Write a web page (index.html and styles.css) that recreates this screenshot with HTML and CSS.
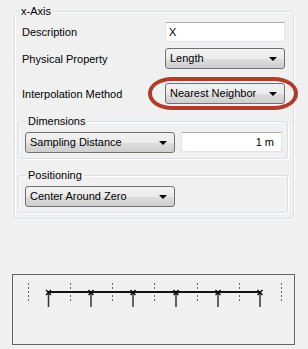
FILE: index.html
```html
<!DOCTYPE html>
<html lang="en">
<head>
    <meta charset="UTF-8">
    <title>x-Axis</title>
    <link rel="stylesheet" href="styles.css">
</head>
<body>
    <div class="page">
        <div class="group outer">
            <div class="legend">x-Axis</div>
            <div class="row first">
                <span class="label">Description</span>
                <div class="textbox">X</div>
            </div>
            <div class="row">
                <span class="label">Physical Property</span>
                <div class="combo">Length<span class="arrow"></span></div>
            </div>
            <div class="row third">
                <span class="label">Interpolation Method</span>
                <div class="combo">Nearest Neighbor<span class="arrow"></span></div>
            </div>

            <div class="group inner dims">
                <div class="legend">Dimensions</div>
                <div class="pair">
                    <div class="combo wide">Sampling Distance<span class="arrow"></span></div>
                    <div class="textbox num">1 m</div>
                </div>
            </div>

            <div class="group inner pos">
                <div class="legend">Positioning</div>
                <div class="pair">
                    <div class="combo wide">Center Around Zero<span class="arrow"></span></div>
                </div>
            </div>
        </div>

        <!-- annotation drawn over the screenshot -->
        <div class="highlight"></div>

        <div class="preview">
            <svg width="281" height="69" viewBox="0 0 281 69">
                <g stroke="#666" stroke-width="1" stroke-dasharray="2 2">
                    <line x1="15.5" y1="8" x2="15.5" y2="26"/>
                    <line x1="57.5" y1="8" x2="57.5" y2="26"/>
                    <line x1="99.5" y1="8" x2="99.5" y2="26"/>
                    <line x1="141.5" y1="8" x2="141.5" y2="26"/>
                    <line x1="184.5" y1="8" x2="184.5" y2="26"/>
                    <line x1="226.5" y1="8" x2="226.5" y2="26"/>
                    <line x1="268.5" y1="8" x2="268.5" y2="26"/>
                </g>
                <line x1="35" y1="17" x2="247" y2="17" stroke="#111" stroke-width="2"/>
                <g stroke="#333" stroke-width="1.5">
                    <line x1="35.5" y1="17" x2="35.5" y2="32"/>
                    <line x1="78" y1="17" x2="78" y2="32"/>
                    <line x1="120" y1="17" x2="120" y2="32"/>
                    <line x1="163" y1="17" x2="163" y2="32"/>
                    <line x1="205" y1="17" x2="205" y2="32"/>
                    <line x1="247" y1="17" x2="247" y2="32"/>
                </g>
                <g stroke="#000" stroke-width="1.3">
                    <path d="M33 15l5 5M38 15l-5 5"/>
                    <path d="M75.5 15l5 5M80.5 15l-5 5"/>
                    <path d="M117.5 15l5 5M122.5 15l-5 5"/>
                    <path d="M160.5 15l5 5M165.5 15l-5 5"/>
                    <path d="M202.5 15l5 5M207.5 15l-5 5"/>
                    <path d="M244.5 15l5 5M249.5 15l-5 5"/>
                </g>
            </svg>
        </div>
    </div>
</body>
</html>
```

FILE: styles.css
```css
body {
    margin: 0;
    background-color: #f0f0f0;
    font-family: "Liberation Sans", Arial, sans-serif;
    font-size: 11px;
    color: #000;
}
.page {
    position: relative;
    width: 308px;
    height: 349px;
    padding-top: 11px;
    box-sizing: border-box;
}
.group {
    border: 1px solid #d5dfe5;
    border-radius: 3px;
    box-shadow: inset 1px 1px 0 #fff, 1px 1px 0 #fff;
}
.legend {
    width: fit-content;
    height: 14px;
    line-height: 14px;
    margin: -8px 0 0 0;
    padding: 0 2px;
    background-color: #f0f0f0;
}
.outer {
    margin-left: 14px;
    padding: 0 8px 5px 7px;
    box-sizing: border-box;
    width: 280px;
}
.outer > .legend {
    margin-left: -3px;
}
.row {
    display: flex;
    align-items: center;
    justify-content: space-between;
    margin-top: 6px;
}
.row.first {
    margin-top: 4px;
}
.row.third {
    margin-top: 14px;
}
.textbox {
    width: 120px;
    height: 20px;
    box-sizing: border-box;
    background-color: #fff;
    border: 1px solid #e2e3ea;
    border-top-color: #abadb3;
    padding: 0 3px;
    line-height: 18px;
}
.textbox.num {
    width: 101px;
    text-align: right;
    padding-right: 7px;
}
.combo {
    position: relative;
    width: 120px;
    height: 21px;
    box-sizing: border-box;
    border: 1px solid #707070;
    border-radius: 3px;
    background: linear-gradient(#f2f2f2 0%, #ebebeb 50%, #dddddd 51%, #cfcfcf 100%);
    padding-left: 4px;
    line-height: 19px;
    white-space: nowrap;
}
.combo.wide {
    width: 150px;
}
.arrow {
    position: absolute;
    right: 7px;
    top: 8px;
    width: 0;
    height: 0;
    border-left: 4px solid transparent;
    border-right: 4px solid transparent;
    border-top: 4px solid #000;
}
.inner {
    margin: 0 -3px 0 -4px;
    padding: 0 5px 5px 6px;
}
.inner > .legend {
    margin-left: 1px;
}
.dims {
    margin-top: 17px;
}
.pos {
    margin-top: 16px;
}
.pair {
    display: flex;
    justify-content: space-between;
    margin-top: 4px;
}
.highlight {
    position: absolute;
    left: 148px;
    top: 77px;
    width: 150px;
    height: 33px;
    box-sizing: border-box;
    border: 4px solid #b23c2c;
    border-radius: 24px / 16px;
}
.preview {
    width: 283px;
    height: 71px;
    box-sizing: border-box;
    margin: 55px 0 0 12px;
    border: 1px solid #646464;
    background-color: #f0f0f0;
}
.preview svg {
    display: block;
}
```
